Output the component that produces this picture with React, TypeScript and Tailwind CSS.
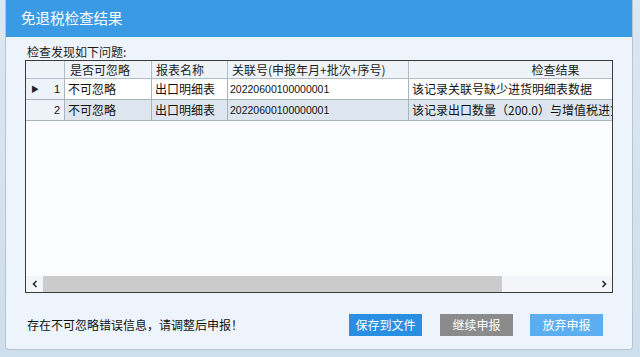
import React from "react";

const rows = [
  {
    ignore: "不可忽略",
    name: "出口明细表",
    code: "20220600100000001",
    result: "该记录关联号缺少进货明细表数据",
  },
  {
    ignore: "不可忽略",
    name: "出口明细表",
    code: "20220600100000001",
    result: "该记录出口数量（200.0）与增值税进货明细表数量不一致",
  },
];

const font = { fontFamily: '"Noto Sans CJK SC", "Liberation Sans", sans-serif' };

const Chevron = ({ dir }: { dir: "left" | "right" }) => (
  <svg width="6" height="8" viewBox="0 0 6 8">
    <path
      d={dir === "left" ? "M4.5 1 L1.5 4 L4.5 7" : "M1.5 1 L4.5 4 L1.5 7"}
      fill="none"
      stroke="#2a2a2a"
      strokeWidth="1.6"
    />
  </svg>
);

const App = () => {
  return (
    <div
      className="w-[640px] h-[357px] bg-gradient-to-b from-[#dbe7f3] to-[#cfdeec] pl-[5px] pr-[7px] pb-[7px] flex overflow-hidden"
      style={font}
    >
      <div className="flex-1 flex flex-col bg-[#eef4fb] border border-t-0 border-[#b7c4d2] rounded-b-[4px]">
        {/* title bar */}
        <div className="h-[37px] bg-[#3a9be4] flex items-center pl-[15px] text-white text-[14.5px] leading-none">
          免退税检查结果
        </div>

        <div className="px-[19px]">
          <div className="h-[23px] flex items-end pb-[2px] pl-[2px] text-[12px] leading-none text-[#1a1a1a]">
            检查发现如下问题:
          </div>

          {/* grid */}
          <div className="h-[233px] w-[588px] border border-[#3c3c3c] bg-[#fafcfe] flex flex-col overflow-hidden">
            <div className="flex-1 overflow-hidden">
              <div className="w-[800px]">
                <div className="flex h-[18px] bg-[#eef3f9] border-b border-[#b3bdc8] text-[12px] leading-none text-[#222]">
                  <div className="w-[39px] border-r border-[#b3bdc8]" />
                  <div className="w-[87px] border-r border-[#b3bdc8] flex items-center pl-[5px]">是否可忽略</div>
                  <div className="w-[76px] border-r border-[#b3bdc8] flex items-center pl-[4px]">报表名称</div>
                  <div className="w-[181px] border-r border-[#b3bdc8] flex items-center pl-[4px]">
                    关联号(申报年月+批次+序号)
                  </div>
                  <div className="w-[294px] border-r border-[#b3bdc8] flex items-center justify-center">检查结果</div>
                </div>
                {rows.map((r, i) => (
                  <div
                    key={i}
                    className={
                      "flex h-[21px] border-b border-[#a9b3be] text-[12px] leading-none text-[#111] " +
                      (i === 1 ? "bg-[#dde6ef]" : "bg-white")
                    }
                  >
                    <div className="w-[39px] border-r border-[#a9b3be] bg-[#eef3f9] flex items-center pr-[4px]">
                      <span className="w-[12px] pl-[5px] text-[8px] text-[#222]">{i === 0 ? "▶" : ""}</span>
                      <span className="flex-1 text-right text-[11px]" style={{ fontFamily: '"Liberation Sans", sans-serif' }}>
                        {i + 1}
                      </span>
                    </div>
                    <div className="w-[87px] border-r border-[#a9b3be] flex items-center pl-[3px]">{r.ignore}</div>
                    <div className="w-[76px] border-r border-[#a9b3be] flex items-center pl-[3px]">{r.name}</div>
                    <div
                      className="w-[181px] border-r border-[#a9b3be] flex items-center pl-[2px] text-[10.5px]"
                      style={{ fontFamily: '"Liberation Sans", sans-serif' }}
                    >
                      {r.code}
                    </div>
                    <div className="w-[294px] border-r border-[#a9b3be] flex items-center pl-[3px] whitespace-nowrap overflow-hidden">
                      {r.result}
                    </div>
                  </div>
                ))}
              </div>
            </div>

            {/* horizontal scrollbar */}
            <div className="h-[16px] flex bg-[#f3f5f8]">
              <div className="w-[17px] flex items-center justify-center">
                <Chevron dir="left" />
              </div>
              <div className="w-[459px] bg-[#cbcbcb]" />
              <div className="flex-1" />
              <div className="w-[17px] flex items-center justify-center">
                <Chevron dir="right" />
              </div>
            </div>
          </div>

          {/* footer */}
          <div className="flex items-center pt-[21px] pr-[10px]">
            <div className="flex-1 pl-[2px] text-[12px] leading-none text-[#111]">
              存在不可忽略错误信息，请调整后申报！
            </div>
            <button className="w-[73px] h-[22px] bg-[#2a8fe2] text-white text-[12px] leading-none">保存到文件</button>
            <button className="w-[73px] h-[22px] ml-[18px] bg-[#8b8b8b] text-white text-[12px] leading-none">继续申报</button>
            <button className="w-[73px] h-[22px] ml-[17px] bg-[#5caef0] text-white text-[12px] leading-none">放弃申报</button>
          </div>
        </div>
      </div>
    </div>
  );
};

export default App;
